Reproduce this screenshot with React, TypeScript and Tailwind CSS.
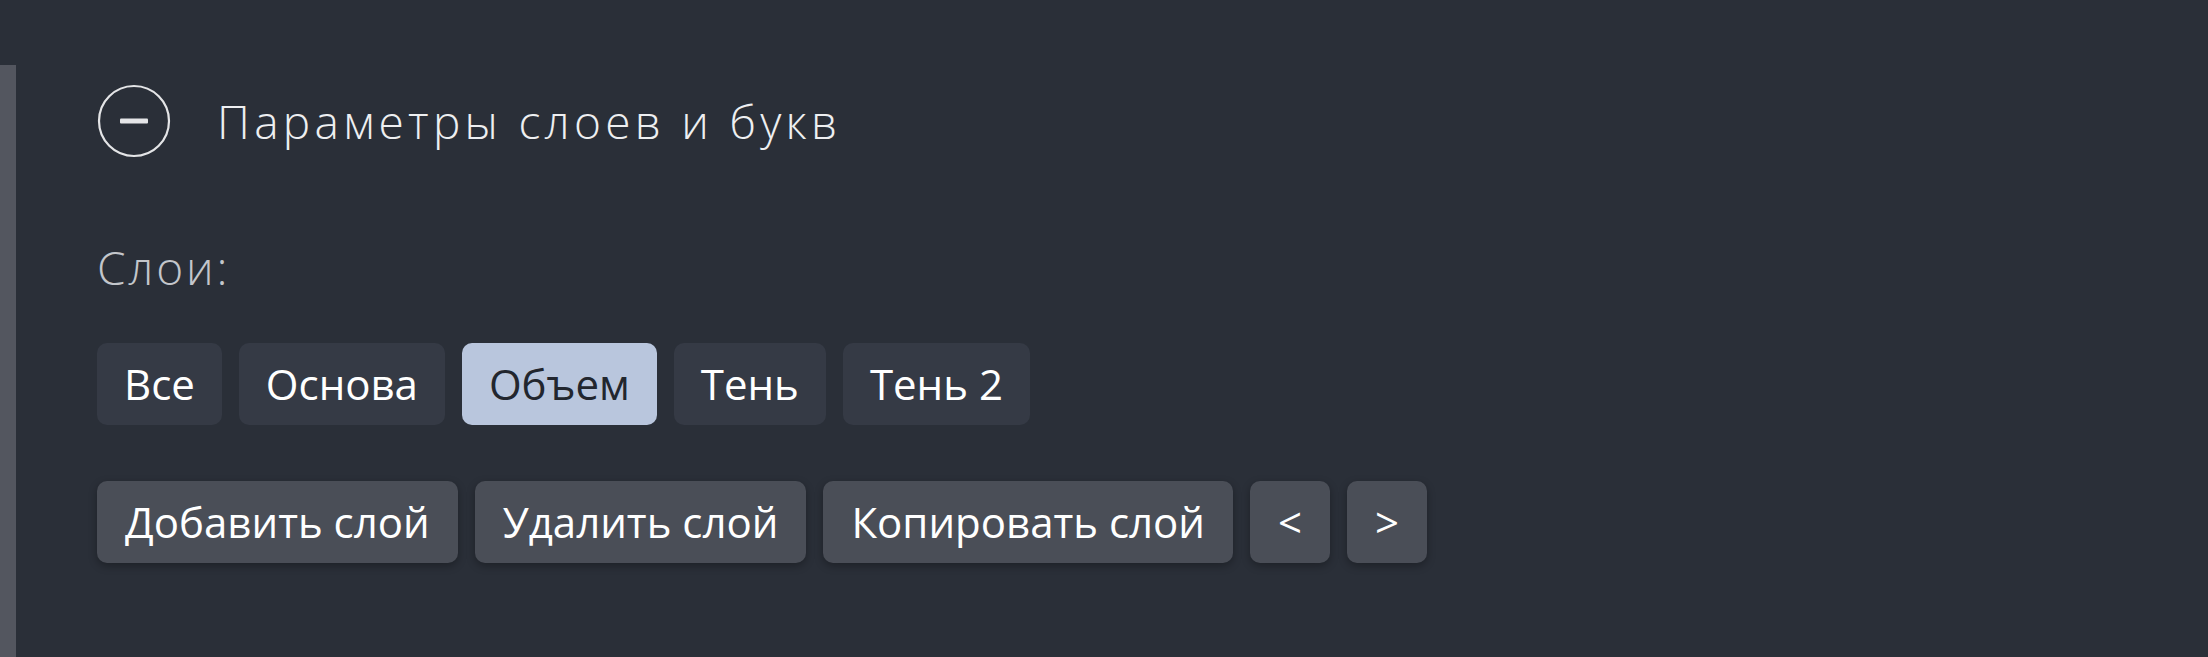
import * as React from "react";

const layers = ["Все", "Основа", "Объем", "Тень", "Тень 2"];
const actions = ["Добавить слой", "Удалить слой", "Копировать слой", "<", ">"];

const MinusCircle = () => (
  <svg width="74" height="74" viewBox="0 0 74 74" className="shrink-0">
    <circle cx="37" cy="37" r="35" fill="none" stroke="#e4e5e7" strokeWidth="2.2" />
    <rect x="23" y="34.5" width="28" height="5" rx="1" fill="#e4e5e7" />
  </svg>
);

const App = () => {
  const [active, setActive] = React.useState("Объем");

  return (
    <div
      className="flex h-[657px] w-full bg-[#2a2f38] text-white"
      style={{ fontFamily: '"Open Sans", "Noto Sans", sans-serif' }}
    >
      <div className="mt-[65px] w-[16px] shrink-0 bg-[#53565f]" />
      <div className="flex flex-col pl-[81px] pt-[84px]">
        <div className="flex items-center gap-[46px]">
          <MinusCircle />
          <h2 className="text-[46px] font-light leading-none tracking-[4.3px] text-[#eeeff1]">
            Параметры слоев и букв
          </h2>
        </div>

        <div className="mt-[86px] text-[46px] font-light leading-none tracking-[2.8px] text-[#c3c6cb]">
          Слои:
        </div>

        <div className="mt-[53px] flex gap-[17px]">
          {layers.map((l) => (
            <button
              key={l}
              onClick={() => setActive(l)}
              className={
                l === active
                  ? "flex h-[82px] items-center rounded-[10px] bg-[#b9c6dd] px-[27px] text-[42px] leading-none text-[#22262e]"
                  : "flex h-[82px] items-center rounded-[10px] bg-[#353a45] px-[27px] text-[42px] leading-none text-white"
              }
            >
              {l}
            </button>
          ))}
        </div>

        <div className="mt-[56px] flex gap-[17px]">
          {actions.map((a) => (
            <button
              key={a}
              className="flex h-[82px] items-center rounded-[10px] bg-[#4a4e57] px-[28px] text-[42px] leading-none text-white shadow-[0_3px_8px_rgba(0,0,0,0.3)]"
            >
              {a}
            </button>
          ))}
        </div>
      </div>
    </div>
  );
};

export default App;
